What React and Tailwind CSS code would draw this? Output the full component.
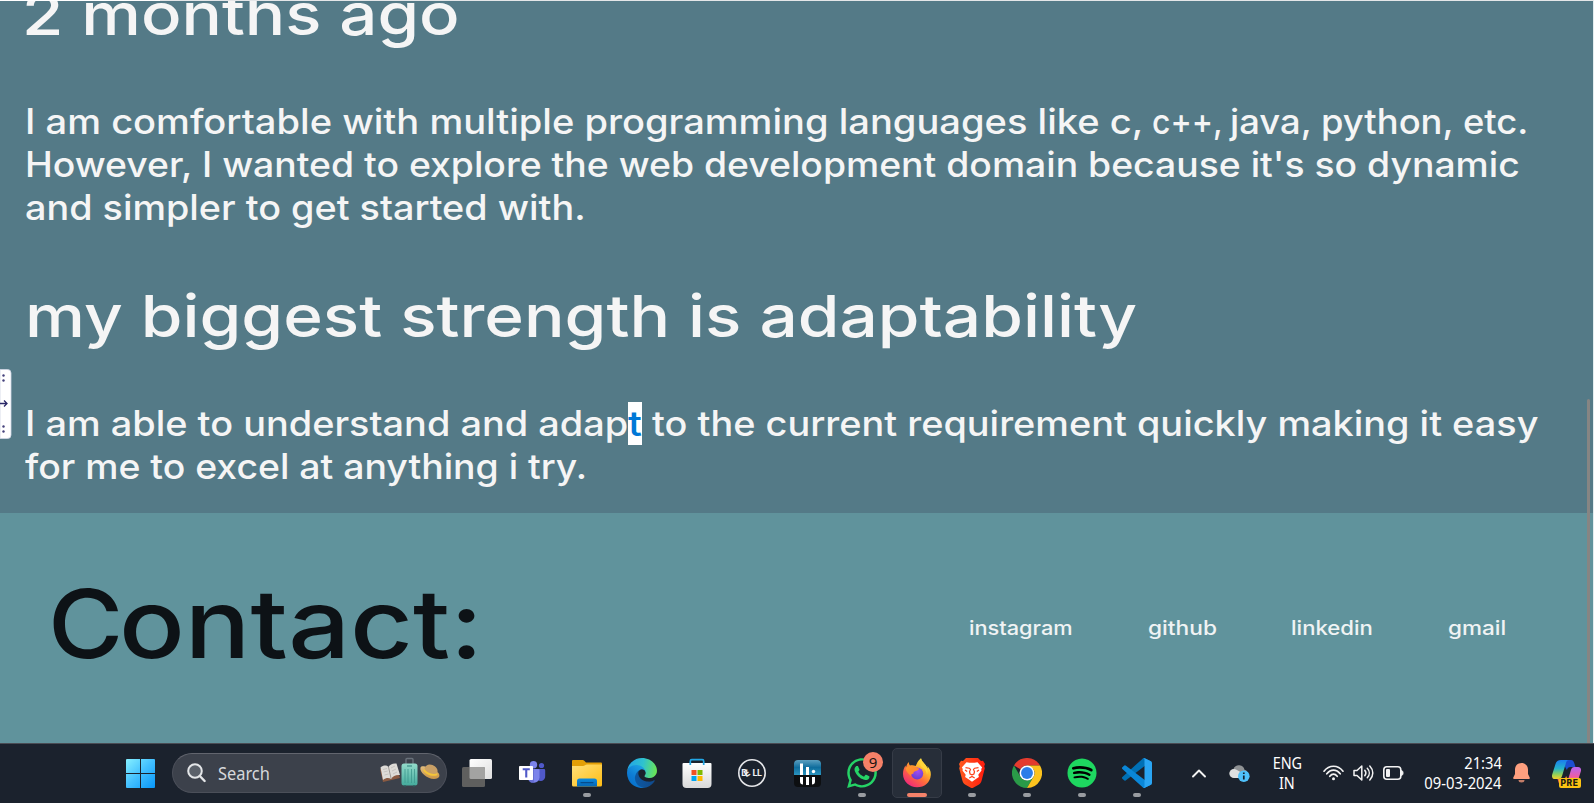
import { FaWhatsapp, FaSpotify } from "react-icons/fa";

function Stretch({ className, children }) {
  return <span className={"inline-block origin-left whitespace-pre " + className}>{children}</span>;
}

function TaskbarApp({ children, running, badge, active }) {
  return (
    <div className="relative flex h-[60px] w-[55px] shrink-0 items-center justify-center">
      {active && <div className="absolute top-[5px] left-[2.5px] h-[50px] w-[50px] rounded-[5px] border border-[#363c47] bg-[#272e39]" />}
      <div className="relative flex h-[30px] w-[30px] items-center justify-center">{children}</div>
      {running && <div className="absolute top-[50px] left-[23.5px] h-1 w-2 rounded-full bg-[#999ca1]" />}
      {active && <div className="absolute top-[50px] left-[17.5px] h-1 w-5 rounded-full bg-[#f4826a]" />}
      {badge && (
        <div className="absolute top-[9px] left-[28.5px] flex h-5 w-5 items-center justify-center rounded-full bg-[#f58168] font-['Noto_Sans',sans-serif] text-[15px] leading-none font-normal text-[#1b1512]">
          {badge}
        </div>
      )}
    </div>
  );
}

function WindowsLogo() {
  return (
    <svg width="29" height="29" viewBox="0 0 29 29">
      <defs>
        <linearGradient id="win" x1="0" y1="0" x2="1" y2="1">
          <stop offset="0" stopColor="#86f0ff" />
          <stop offset="0.5" stopColor="#42bfff" />
          <stop offset="1" stopColor="#0797f9" />
        </linearGradient>
      </defs>
      <path fill="url(#win)" d="M1 0h13v14H0V1a1 1 0 0 1 1-1zM15 0h13a1 1 0 0 1 1 1v13H15zM0 15h14v14H1a1 1 0 0 1-1-1zM15 15h14v13a1 1 0 0 1-1 1H15z" />
    </svg>
  );
}

function TravelArt() {
  return (
    <svg width="62" height="32" viewBox="0 0 62 32">
      <defs>
        <linearGradient id="case" x1="0" y1="0" x2="0" y2="1">
          <stop offset="0" stopColor="#93dccb" />
          <stop offset="1" stopColor="#45aa9c" />
        </linearGradient>
        <linearGradient id="hat" x1="0" y1="0" x2="0" y2="1">
          <stop offset="0" stopColor="#e2bd7e" />
          <stop offset="1" stopColor="#c99445" />
        </linearGradient>
      </defs>
      <path d="M1 12l3 13 17-4-1-3z" fill="#8a5a42" />
      <path d="M1.500 10.500c3-2.500 6-2.500 8-.5 1.500-2.500 4-4 8-3.500l3.500 11.500c-4-.5-7 1-9 4-2-1.500-5-1.500-8 1z" fill="#dedbd7" />
      <path d="M9.500 10l2.700 12" stroke="#9e9995" strokeWidth="1" fill="none" />
      <path d="M4 12.500l4-1M4.700 15l4-1M5.500 18l4-1M12 11l4-2M13 14l4-2M14 17l4-2" stroke="#bdb8b3" strokeWidth=".7" fill="none" />
      <path d="M27 7V2.500a1 1 0 0 1 1-1h5a1 1 0 0 1 1 1V7" fill="none" stroke="#69717a" strokeWidth="1.400" />
      <rect x="22.500" y="6.500" width="16" height="22" rx="2.500" fill="url(#case)" />
      <path d="M26 12v14M29 12v14M32.500 12v14M35.500 12v14" stroke="#3d988d" strokeWidth=".8" />
      <path d="M28 9h5" stroke="#3c8d86" strokeWidth="1.200" />
      <path d="M25 29.300h2M34 29.300h2" stroke="#2d5456" strokeWidth="1.500" />
      <path d="M41.500 10.500c-1.500 4 6.500 11.500 13.500 11.500 6 0 6.500-4 4-6.500l-13-6c-2-.6-4-.5-4.500 1z" fill="url(#hat)" />
      <path d="M45.500 12c.5-4 4.500-5.500 8-4C57.500 9.700 59.500 12.500 58.300 16.500c-5 2-11-1-12.800-4.500z" fill="#c9a066" />
      <path d="M45.200 12c2.500 4 8.500 6 13.200 4.300l-.2 2c-5.500 1.700-11.700-1-14-4.800z" fill="#f5c637" />
    </svg>
  );
}

function TaskView() {
  return (
    <svg width="30" height="30" viewBox="0 0 30 30">
      <defs>
        <linearGradient id="tv" x1="0" y1="0" x2="1" y2="1"><stop offset="0" stopColor="#fff" /><stop offset="1" stopColor="#dedede" /></linearGradient>
      </defs>
      <rect x="7.500" y="1" width="22.500" height="20" rx="1.500" fill="url(#tv)" />
      <rect x="0" y="9" width="23" height="20" rx="1.500" fill="#5f5f5e" />
      <path d="M7.500 9H21.500a1.500 1.500 0 0 1 1.500 1.500V21H9a1.500 1.500 0 0 1-1.500-1.500z" fill="#a3a3a2" />
    </svg>
  );
}

function Teams() {
  return (
    <svg width="30" height="30" viewBox="0 0 30 30">
      <circle cx="24.500" cy="7.500" r="2.600" fill="#5059c9" />
      <path d="M18 11h9a1.200 1.200 0 0 1 1.200 1.200V18a4.500 4.500 0 0 1-9 1z" fill="#5059c9" />
      <circle cx="16.500" cy="6.800" r="3.700" fill="#7b83eb" />
      <path d="M11 11h10.500a1 1 0 0 1 1 1v7.500a6 6 0 0 1-11.700 1z" fill="#7b83eb" />
      <path d="M12 11h5v14h-3l-2-3z" fill="#5a62c3" opacity=".6" />
      <rect x="2" y="8" width="14" height="14" rx=".8" fill="#fff" />
      <path d="M5.700 11.200h7.100M9.250 11.200v8.300" stroke="#5059c9" strokeWidth="2.100" />
    </svg>
  );
}

function Explorer() {
  return (
    <svg width="30" height="30" viewBox="0 0 30 30">
      <defs>
        <linearGradient id="fold" x1="0" y1="0" x2="1" y2="1"><stop offset="0" stopColor="#ffe07a" /><stop offset="1" stopColor="#ffbd14" /></linearGradient>
        <linearGradient id="foldb" x1="0" y1="0" x2="0" y2="1"><stop offset="0" stopColor="#0c8ade" /><stop offset="1" stopColor="#0667b5" /></linearGradient>
      </defs>
      <path d="M1 2h9.500c1 0 1.500.5 2.500 1.500l1 1h15a1 1 0 0 1 1 1V12H0V3a1 1 0 0 1 1-1z" fill="#e39f07" />
      <path d="M0 8h11c1.500 0 2.500-1.500 4-1.500h15V27a1.500 1.500 0 0 1-1.500 1.500h-27A1.500 1.500 0 0 1 0 27z" fill="url(#fold)" />
      <path d="M5 28.500V23a2.500 2.500 0 0 1 2.500-2.500h15A2.500 2.500 0 0 1 25 23v5.500z" fill="url(#foldb)" />
      <path d="M9 24.600h12" stroke="#064c8c" strokeWidth="1.200" strokeLinecap="round" />
    </svg>
  );
}

function Edge() {
  return (
    <svg width="30" height="30" viewBox="0 0 256 256">
      <defs>
        <linearGradient id="e1" x1="60" y1="177" x2="240" y2="177" gradientUnits="userSpaceOnUse"><stop offset="0" stopColor="#0c59a4" /><stop offset="1" stopColor="#114a8b" /></linearGradient>
        <linearGradient id="e2" x1="140" y1="100" x2="40" y2="230" gradientUnits="userSpaceOnUse"><stop offset="0" stopColor="#1b9de2" /><stop offset=".6" stopColor="#0d7bd4" /><stop offset="1" stopColor="#0873cc" /></linearGradient>
        <linearGradient id="e3" x1="10" y1="60" x2="250" y2="110" gradientUnits="userSpaceOnUse"><stop offset="0" stopColor="#23a6e6" /><stop offset=".5" stopColor="#2fc2cf" /><stop offset="1" stopColor="#6ae555" /></linearGradient>
      </defs>
      <path fill="url(#e1)" d="M231 190.500c-3.400 1.800-6.900 3.400-10.500 4.700a101.900 101.900 0 0 1-35.900 6.400c-47.300 0-88.500-32.500-88.500-74.300a31.500 31.500 0 0 1 16.400-27.300c-42.800 1.800-53.800 46.400-53.800 72.500 0 74 68.100 81.400 82.800 81.400 7.900 0 19.800-2.300 27-4.600l1.300-.4a128.300 128.300 0 0 0 66.600-52.800 4 4 0 0 0-5.400-5.600z" />
      <path fill="url(#e2)" d="M105.700 241.400a79.200 79.200 0 0 1-22.700-21.300 80.700 80.700 0 0 1 29.500-120c3.200-1.500 8.500-4.100 15.600-4a32.400 32.400 0 0 1 25.700 13 31.900 31.900 0 0 1 6.300 18.700c0-.2 24.500-79.600-80-79.600-43.900 0-80 41.700-80 78.200a130.200 130.200 0 0 0 12.100 56 128 128 0 0 0 156.400 67 75.500 75.500 0 0 1-62.800-8z" />
      <path fill="url(#e3)" d="M152.300 148.900c-.9 1-3.400 2.500-3.400 5.600 0 2.600 1.700 5.200 4.800 7.300 14.300 10 41.400 8.600 41.500 8.600a59.600 59.600 0 0 0 30.300-8.300 61.400 61.400 0 0 0 30.400-52.900c.3-22.400-8-37.300-11.300-43.900C223.500 23.900 177.700 0 128 0A128 128 0 0 0 0 126.200c.5-36.500 36.800-66 80-66 3.500 0 23.500.3 42 10a72.600 72.600 0 0 1 30.900 29.300c6.100 10.600 7.200 24.100 7.200 29.500s-2.700 13.300-7.800 19.900z" />
    </svg>
  );
}

function Store() {
  return (
    <svg width="30" height="30" viewBox="0 0 30 30">
      <defs>
        <linearGradient id="bag" x1="0" y1="0" x2="0" y2="1"><stop offset="0" stopColor="#fff" /><stop offset="1" stopColor="#d9d9d9" /></linearGradient>
      </defs>
      <path d="M.5 6a1 1 0 0 1 1-1h27a1 1 0 0 1 1 1V26a4 4 0 0 1-4 4h-21a4 4 0 0 1-4-4z" fill="url(#bag)" />
      <path d="M8.300 7V3.200a1.500 1.500 0 0 1 1.500-1.500h10.400a1.500 1.500 0 0 1 1.500 1.500V7" fill="none" stroke="#22a7e6" strokeWidth="1.700" />
      <path d="M9.500 12h5v5h-5z" fill="#f25022" /><path d="M15.500 12h5v5h-5z" fill="#7fba00" />
      <path d="M9.500 18h5v5h-5z" fill="#00a4ef" /><path d="M15.500 18h5v5h-5z" fill="#ffb900" />
    </svg>
  );
}

function Dell() {
  return (
    <svg width="30" height="30" viewBox="0 0 30 30">
      <circle cx="15" cy="15" r="13.200" fill="none" stroke="#e4e5e8" strokeWidth="1.600" />
      <text x="4.200 9.300 15.500 20.100" y="18.200 19.300 18.200 18.200" rotate="0 -32 0 0" fontFamily="Inter, sans-serif" fontWeight="700" fontSize="8.800" fill="#f0f1f3">DELL</text>
    </svg>
  );
}

function BarsApp() {
  return (
    <svg width="27" height="27" viewBox="0 0 27 27">
      <defs>
        <linearGradient id="bars" x1="0" y1="0" x2="0" y2="1"><stop offset="0" stopColor="#5b9fc0" /><stop offset=".5" stopColor="#0f6d9d" /><stop offset="1" stopColor="#2b95c0" /></linearGradient>
      </defs>
      <rect width="27" height="27" rx="4" fill="#0d0f11" />
      <path d="M0 15V4a4 4 0 0 1 4-4h19a4 4 0 0 1 4 4v11z" fill="url(#bars)" />
      <path d="M6 3.500h3V15H6zM12 7h3v8h-3zM6 17h3v7.500a3 3 0 0 1-3-3zM12 17h3v8h-3zM18 17h3v4.500a3 3 0 0 1-3 3z" fill="#fff" />
      <circle cx="19.500" cy="11.500" r="1.700" fill="#fff" />
    </svg>
  );
}

function Firefox() {
  return (
    <svg width="30" height="30" viewBox="0 0 30 30">
      <defs>
        <linearGradient id="fx" x1="24" y1="3" x2="6" y2="27" gradientUnits="userSpaceOnUse"><stop offset="0" stopColor="#fff04a" /><stop offset=".3" stopColor="#ffb52a" /><stop offset=".6" stopColor="#ff6a3d" /><stop offset="1" stopColor="#f0287a" /></linearGradient>
        <radialGradient id="fxg" cx=".55" cy=".3" r=".8"><stop offset="0" stopColor="#a44df0" /><stop offset="1" stopColor="#5b3bd0" /></radialGradient>
        <linearGradient id="fxh" x1="0" y1="0" x2="1" y2="1"><stop offset="0" stopColor="#ff9a2c" /><stop offset="1" stopColor="#ff7a32" /></linearGradient>
      </defs>
      <path d="M19 .3c.4 2.500 2.500 4.200 4.500 6.700 1 1.300 1.700 2.500 2 3.500.2-.7.100-1.600-.2-2.400C28 11 29 14 28.800 17 28.300 24.500 22.500 29.300 15 29.300S1 23.500 1 16c0-3.500 1-6.500 2.500-8.500L4 9.500C4.600 7 5.500 5.300 6.800 4c0 1.500.4 2.600 1.200 3.500 2-.5 4-.3 5.700.5C15 5 16.500 2 19 .3z" fill="url(#fx)" />
      <circle cx="15.200" cy="15.500" r="6" fill="url(#fxg)" />
      <path d="M3.500 10.500c2-2.800 6-3.500 10-1.800 1 .8 2 1.700 3.700 1.700-.5 1.500-2 2.300-4 2.800-1.500.4-2 1.500-1.700 2.600-1.500-.3-2.800.4-2.500 2.400C7 16 4 14 3.500 10.500z" fill="url(#fxh)" />
      <path d="M19 .3c.4 2.500 2.500 4.200 4.500 6.700 2 3 2.800 6 1.500 9.500-.5-3-2-5.500-4.500-7C18 8 17.300 4 19 .3z" fill="#ffd53a" />
    </svg>
  );
}

function Brave() {
  return (
    <svg width="30" height="30" viewBox="0 0 30 30">
      <defs>
        <linearGradient id="br" x1="0" y1="0" x2="1" y2="0"><stop offset="0" stopColor="#ff5a1f" /><stop offset="1" stopColor="#ff1c0e" /></linearGradient>
      </defs>
      <path d="M9 0h12l3 3 2-.3L28 6l-.8 2.300.6 2L24.500 23c-.5 1.700-1.200 2.500-2.500 3.400L15.700 30h-1.400L8 26.400c-1.300-.9-2-1.700-2.500-3.400L2.200 10.300l.6-2L2 6l2-3.300L6 3z" fill="url(#br)" />
      <path d="M9.500 4.200l3 .6h5l3-.6 4.700 5.300-1 1.500.3 1.500-3.200 4.200.6 2.200-3.400 2.300L15 23.800l-3.500-2.600-3.400-2.300.6-2.200-3.200-4.200.3-1.500-1-1.500z" fill="#fff" />
      <path d="M8.500 9.600l3.800.6 1.200 1.200-1 2.300.6 2.300 1.900.8 1.900-.8.6-2.300-1-2.300 1.200-1.200 3.800-.6M8 12l2.200 1.500M22 12l-2.200 1.500M12.300 20l2.700-1.500 2.700 1.500" fill="none" stroke="#ff401a" strokeWidth="1.200" />
    </svg>
  );
}

function Chrome() {
  return (
    <svg width="30" height="30" viewBox="0 0 48 48">
      <path d="M3.200 12A24 24 0 0 1 44.800 12H24a12 12 0 0 0-10.400 6z" fill="#e33b2e" />
      <path d="M3.200 12 13.600 30A12 12 0 0 0 24 36l-0.500 0L34.400 30 24 48A24 24 0 0 1 3.200 12z" fill="#2a9a48" />
      <path d="M44.800 12A24 24 0 0 1 24 48L34.400 30A12 12 0 0 0 34.400 18L24 12z" fill="#fcc31e" />
      <circle cx="24" cy="24" r="12" fill="#fff" /><circle cx="24" cy="24" r="9.500" fill="#2b7de9" />
    </svg>
  );
}

function Code() {
  return (
    <svg width="30" height="30" viewBox="0 0 100 100">
      <path d="M96.500 10.600 75.800.9a6.200 6.200 0 0 0-7.100 1.200L1.300 63.200a4.200 4.200 0 0 0 0 6.200l5.500 5a4.200 4.200 0 0 0 5.400.2l81.200-61.600c2.700-2 6.600 0 6.600 3.300v-.2a6.300 6.300 0 0 0-3.500-5.500z" fill="#0070b5" />
      <path d="M96.500 89.400 75.800 99.100a6.200 6.200 0 0 1-7.100-1.200L1.300 36.800a4.200 4.200 0 0 1 0-6.200l5.500-5a4.200 4.200 0 0 1 5.400-.2l81.200 61.600c2.700 2 6.600 0 6.600-3.300v.2a6.300 6.300 0 0 1-3.500 5.500z" fill="#0a87d8" />
      <path d="M75.900 99.100a6.300 6.300 0 0 1-7.200-1.200c2.300 2.300 6.300.7 6.300-2.600V4.700c0-3.300-4-5-6.300-2.600A6.300 6.300 0 0 1 75.900.9l20.600 9.900a6.300 6.300 0 0 1 3.500 5.600v67.200a6.300 6.300 0 0 1-3.500 5.600z" fill="#2aa5f3" />
    </svg>
  );
}

function Copilot() {
  return (
    <svg width="29" height="26" viewBox="0 0 29 26">
      <defs>
        <linearGradient id="cp1" x1="0" y1="0" x2="0" y2="1"><stop offset="0" stopColor="#1a7cf0" /><stop offset=".45" stopColor="#25b3c9" /><stop offset=".75" stopColor="#8fd05a" /><stop offset="1" stopColor="#f5d02a" /></linearGradient>
        <linearGradient id="cp2" x1="0" y1="0" x2="0" y2="1"><stop offset="0" stopColor="#b565f2" /><stop offset=".5" stopColor="#ec5ca5" /><stop offset="1" stopColor="#fb8a52" /></linearGradient>
      </defs>
      <path d="M9 0h10c2 0 2.700 1.500 3.300 3.200L23.500 7h-5c-2 0-3 1-3.600 3z" fill="#1b4ed0" />
      <path d="M9 0h8c-2 0-2.600 1.500-3.200 3.500l-3.600 12C9.500 18 8.500 19 6.500 19H3c-2.500 0-3.500-2-2.800-4.500L3.500 4C4.300 1.500 6 0 9 0z" fill="url(#cp1)" />
      <path d="M20 26H10c-2 0-2.700-1.500-3.300-3.200L5.500 19h5c2 0 3-1 3.600-3z" fill="#f5703d" />
      <path d="M20 26h-8c2 0 2.600-1.500 3.200-3.500l3.600-12C19.500 8 20.500 7 22.500 7H26c2.500 0 3.500 2 2.800 4.500L25.500 22C24.700 24.500 23 26 20 26z" fill="url(#cp2)" />
    </svg>
  );
}

function Taskbar() {
  return (
    <div className="flex h-[60px] items-center border-t border-[#4a4c54] bg-[#1b222d] pb-px font-['Noto_Sans',sans-serif]">
      <div className="ml-[126px] w-[29px]"><WindowsLogo /></div>
      <div className="ml-[17px] flex h-10 w-[275px] items-center rounded-full border border-[#4b4f59] border-t-[#62656e] bg-[#3c414b] pl-[14px]">
        <svg width="19" height="20" viewBox="0 0 19 20" fill="none" stroke="#e4e6e8">
          <circle cx="8" cy="8" r="6.800" strokeWidth="2" fill="#5b616a" />
          <path d="M12.800 13l4.800 5" strokeWidth="2.400" strokeLinecap="round" />
        </svg>
        <div className="ml-[12px] w-[161px] text-[18px] leading-[24px] font-normal text-[#d6d8db]"><Stretch className="scale-x-[0.91]">Search</Stretch></div>
        <TravelArt />
      </div>
      <div className="ml-[2.5px] flex">
        <TaskbarApp><TaskView /></TaskbarApp>
        <TaskbarApp><Teams /></TaskbarApp>
        <TaskbarApp running><Explorer /></TaskbarApp>
        <TaskbarApp><Edge /></TaskbarApp>
        <TaskbarApp><Store /></TaskbarApp>
        <TaskbarApp><Dell /></TaskbarApp>
        <TaskbarApp><BarsApp /></TaskbarApp>
        <TaskbarApp running badge="9"><FaWhatsapp className="h-[34px] w-[34px] shrink-0 text-[#25d366]" /></TaskbarApp>
        <TaskbarApp active><Firefox /></TaskbarApp>
        <TaskbarApp running><Brave /></TaskbarApp>
        <TaskbarApp running><Chrome /></TaskbarApp>
        <TaskbarApp running>
          <div className="flex h-[28px] w-[28px] items-center justify-center rounded-full bg-black"><FaSpotify className="h-[30px] w-[30px] shrink-0 text-[#1ed760]" /></div>
        </TaskbarApp>
        <TaskbarApp running><Code /></TaskbarApp>
      </div>
      <svg className="ml-[27.5px] shrink-0" width="14" height="9" viewBox="0 0 14 9" fill="none" stroke="#f2f2f2" strokeWidth="1.900" strokeLinecap="round" strokeLinejoin="round"><path d="M1 7.500l6-6 6 6" /></svg>
      <svg className="ml-[22.5px] shrink-0" width="21" height="20" viewBox="0 0 21 20">
        <path d="M5 15a4.500 4.500 0 0 1-.5-9C5.500 3 8 2 10.500 2.300c3 .3 4.500 2.200 5 4.400 2 .3 3.200 2 3 4z" fill="#8f9294" />
        <path d="M5 15a4.500 4.500 0 1 1 2.500-8.300L15 11v4z" fill="#dfe0e1" />
        <circle cx="14.800" cy="13.200" r="5.800" fill="#4fc1fb" />
        <path d="M14.800 12.500v4M14.800 9.500v1.500" stroke="#14202c" strokeWidth="1.700" />
      </svg>
      <div className="ml-[21.5px] flex w-[32px] shrink-0 flex-col items-center text-[16px] leading-[20px] font-normal text-white">
        <span className="inline-block scale-x-[0.9]">ENG</span>
        <span className="inline-block scale-x-[0.9]">IN</span>
      </div>
      <svg className="ml-[20px] shrink-0" width="21" height="16" viewBox="0 0 21 16" fill="none" stroke="#f3f3f3" strokeWidth="1.700" strokeLinecap="round">
        <path d="M1 6.200C6.200-.4 14.800-.4 20 6.200M3.800 8.800c3.800-4.900 9.600-4.900 13.400 0M6.800 11.300c2.200-2.800 5.200-2.800 7.400 0" />
        <circle cx="10.500" cy="13.700" r="1.500" fill="#f3f3f3" stroke="none" />
      </svg>
      <svg className="ml-[9px] shrink-0" width="21" height="18" viewBox="0 0 21 18" fill="none" stroke="#f3f3f3" strokeWidth="1.500" strokeLinecap="round" strokeLinejoin="round">
        <path d="M1 6.500h3L8.800 2v14L4 11.500H1z M11.800 6.300c1.300 1.600 1.300 3.800 0 5.400M14.300 4.200c2.600 2.800 2.600 6.800 0 9.600M16.800 2c4 4.200 4 9.800 0 14" />
      </svg>
      <svg className="ml-[9px] shrink-0" width="21" height="14" viewBox="0 0 21 14">
        <rect x=".8" y=".8" width="17" height="12.400" rx="3" fill="none" stroke="#f3f3f3" strokeWidth="1.600" />
        <rect x="3" y="3" width="4" height="8" rx="1" fill="#f3f3f3" />
        <path d="M18.500 4.500c2 .3 2 4.700 0 5z" fill="#f3f3f3" stroke="#f3f3f3" />
      </svg>
      <div className="ml-[6.500px] flex w-[91.500px] shrink-0 flex-col items-end text-[16px] leading-[20px] font-normal whitespace-nowrap text-white">
        <span className="inline-block origin-right scale-x-[0.92]">21:34</span>
        <span className="inline-block origin-right scale-x-[0.925]">09-03-2024</span>
      </div>
      <svg className="ml-[10.500px] shrink-0" width="17" height="20" viewBox="0 0 17 20" fill="#fd9f7f">
        <path d="M8.500 0C4.700 0 2 2.800 2 6.500V11L.3 14.500c-.3.800.1 1.500 1 1.500h14.400c.9 0 1.300-.7 1-1.500L15 11V6.500C15 2.800 12.300 0 8.500 0z" />
        <path d="M5.500 17h6a3 2.500 0 0 1-6 0z" fill="#c37d68" />
      </svg>
      <div className="relative ml-[22px] shrink-0">
        <Copilot />
        <div className="absolute top-[18px] left-[7px] flex h-[10px] w-[22px] items-center justify-center rounded-[2px] bg-[#fcc313] font-['Inter',sans-serif] text-[8.500px] leading-none font-extrabold tracking-[0.6px] text-[#1c1a12]">PRE</div>
      </div>
    </div>
  );
}

export default function App() {
  return (
    <div className="h-[803px] w-[1594px] overflow-hidden bg-[#1b222d] font-['Inter',sans-serif] font-medium">
      <main className="relative flex h-[743px] flex-col">
        <section className="h-[513px] overflow-hidden bg-[#547a87] text-[#f5f5f5]">
          <h2 className="-mt-[22px] pl-[22px] text-[58px] leading-[72px]"><Stretch className="scale-x-[1.158]">2 months ago</Stretch></h2>
          <div className="mt-[50px] flex flex-col pl-[24.500px] text-[35px] leading-[43px]">
            <div className="flex">
              <div className="w-[1127px]"><Stretch className="scale-x-[1.088]">I am comfortable with multiple programming languages like c, </Stretch></div>
              <div className="w-[78px]"><Stretch className="scale-x-[0.910]">c++, </Stretch></div>
              <Stretch className="scale-x-[1.040]">java, python, etc.</Stretch>
            </div>
            <Stretch className="scale-x-[1.067]">However, I wanted to explore the web development domain because it's so dynamic</Stretch>
            <Stretch className="scale-x-[1.079]">and simpler to get started with.</Stretch>
          </div>
          <h2 className="mt-[51px] pl-[24.500px] text-[58px] leading-[72px]"><Stretch className="scale-x-[1.164]">my biggest strength is adaptability</Stretch></h2>
          <div className="mt-[50px] flex flex-col pl-[24.500px] text-[35px] leading-[43px]">
            <div className="flex">
              <div className="w-[603.500px]"><Stretch className="scale-x-[1.083]">I am able to understand and adap</Stretch></div>
              <div className="mr-[10px] w-[14px] bg-white text-[#0078d7]"><Stretch className="scale-x-[1.170]">t</Stretch></div>
              <Stretch className="scale-x-[1.082]">to the current requirement quickly making it easy</Stretch>
            </div>
            <Stretch className="scale-x-[1.068]">for me to excel at anything i try.</Stretch>
          </div>
        </section>
        <footer className="flex h-[230px] items-center justify-between bg-[#60939c] pr-[86px] pl-[48px]">
          <h1 className="-mt-[9px] flex text-[95px] leading-[116px] text-[#0d1216]">
            <span className="w-[71px]"><Stretch className="scale-x-[1.080]">C</Stretch></span>
            <Stretch className="scale-x-[1.148]">ontact:</Stretch>
          </h1>
          <nav className="flex text-[19.500px] leading-6 text-[#f0f3f4]">
            <a className="w-[179px]"><Stretch className="scale-x-[1.115]">instagram</Stretch></a>
            <a className="w-[143px]"><Stretch className="scale-x-[1.165]">github</Stretch></a>
            <a className="w-[157px]"><Stretch className="scale-x-[1.135]">linkedin</Stretch></a>
            <a className="w-[60px]"><Stretch className="scale-x-[1.155]">gmail</Stretch></a>
          </nav>
        </footer>
        <div className="absolute top-0 right-0 left-0 flex h-px"><div className="w-[160px] bg-white" /><div className="flex-1 bg-[#e4e6e8]" /></div>
        <div className="absolute top-0 right-0 h-[743px] w-px bg-[#e3edef]" />
        <div className="absolute top-[399px] right-[4px] h-[344px] w-[3px] rounded-t-full bg-[#878583]" />
        <svg className="absolute top-[369px] left-0" width="12" height="70" viewBox="0 0 12 70">
          <path d="M0 .5h7.500a3.500 3.500 0 0 1 3.500 3.500v62a3.500 3.500 0 0 1-3.500 3.500H0z" fill="#fff" stroke="#cfd6e4" strokeWidth=".8" />
          <g fill="#45427c"><circle cx="3.500" cy="6.500" r="1.200" /><circle cx="3.500" cy="11.500" r="1.200" /><circle cx="3.500" cy="57.500" r="1.200" /><circle cx="3.500" cy="62.500" r="1.200" /></g>
          <path d="M0 34.500h6.500M4 31.500l3 3-3 3" fill="none" stroke="#2b2868" strokeWidth="1.300" />
        </svg>
      </main>
      <Taskbar />
    </div>
  );
}
